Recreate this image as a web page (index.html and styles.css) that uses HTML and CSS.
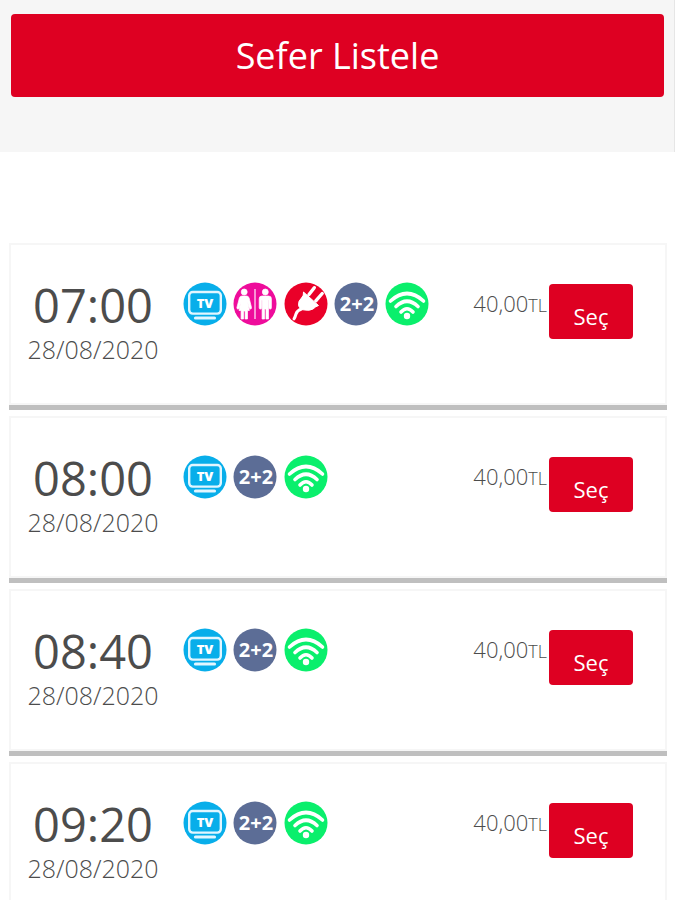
FILE: index.html
```html
<!DOCTYPE html>
<html lang="tr">
<head>
<meta charset="utf-8">
<meta name="viewport" content="width=device-width, initial-scale=1">
<title>Sefer Listele</title>
<link rel="stylesheet" href="styles.css">
</head>
<body>
<svg class="sprite" aria-hidden="true">
  <symbol id="tv" viewBox="0 0 44 44">
    <circle cx="22" cy="22" r="21.5" fill="#08aeea"/>
    <rect x="6.2" y="10" width="31.6" height="21.6" rx="3.5" fill="none" stroke="#e2f6ff" stroke-width="2.4"/>
    <path d="M12.500 36h19" stroke="#e2f6ff" stroke-width="3.200" stroke-linecap="round"/>
    <text class="tv-text" x="22" y="25.500" text-anchor="middle">TV</text>
  </symbol>
  <symbol id="wc" viewBox="0 0 44 44">
    <circle cx="22" cy="22" r="21.500" fill="#ee0c9b"/>
    <g fill="#fff" stroke="#fff" stroke-width=".7">
      <circle cx="11.200" cy="10" r="3"/>
      <path d="M9 14h4.500q2 0 2.600 2l2.400 9.500q.2 1.300-.8 1.500t-1.500-1.200L14.600 20l1.800 8.500H14.500V37h-2.400V29h-1.600v8H8.100V28.500H6l1.800-8.500-1.600 6q-.5 1.200-1.500 1t-.8-1.500L6.400 16Q7 14 9 14z"/>
      <circle cx="32.300" cy="10" r="3"/>
      <path d="M29 14h6.600q2.800 0 2.800 2.800v9q0 1.300-1.200 1.300t-1.200-1.300V18.500h-.5V37h-2.500V27h-1.400v10h-2.500V18.500h-.5v7.300q0 1.300-1.200 1.300t-1.200-1.300v-9Q26.200 14 29 14z"/>
    </g>
    <path d="M22 7v30" stroke="#fbb6e2" stroke-width="1.600"/>
  </symbol>
  <symbol id="plug" viewBox="0 0 44 44">
    <circle cx="22" cy="22" r="21.500" fill="#ea0029"/>
    <path d="M19.500 10L34.500 23.500Q31.500 24.500 29 27q-3.500 2-8 1-5 0-6.500-4.500-.5-4.500 3-7.500 2.500-2.500 2-6z" fill="#fff" stroke="#fff" stroke-width="1" stroke-linejoin="round"/>
    <path d="M25 12.500l5.300-6.800M31.800 18.800l6.400-7.300" stroke="#fff" stroke-width="3.400" stroke-linecap="round"/>
    <path d="M17.500 27q-4.500 1.500-5.500 5t-2 4.800" fill="none" stroke="#fff" stroke-width="3" stroke-linecap="round"/>
  </symbol>
  <symbol id="seats" viewBox="0 0 44 44">
    <circle cx="22" cy="22" r="21.500" fill="#5c6d96"/>
    <text class="seats-text" x="23" y="29" text-anchor="middle">2+2</text>
  </symbol>
  <symbol id="wifi" viewBox="0 0 44 44">
    <circle cx="22" cy="22" r="21.500" fill="#0aef6c"/>
    <g fill="none" stroke="#fff" stroke-width="3.600" stroke-linecap="round">
      <path d="M5.500 19Q22 4 38.500 19"/>
      <path d="M11 24.500Q22 14 33 24.500"/>
      <path d="M16 30Q22 23.500 28 30"/>
    </g>
    <circle cx="22" cy="34" r="3.200" fill="#fff"/>
  </symbol>
</svg>

<header class="search">
  <button class="btn search-btn" type="button">Sefer Listele</button>
</header>

<main class="trips">
  <article class="trip">
    <div class="when"><time class="hour">07:00</time><time class="date">28/08/2020</time></div>
    <div class="features">
      <svg class="icon" role="img" aria-label="TV"><use href="#tv"/></svg>
      <svg class="icon" role="img" aria-label="WC"><use href="#wc"/></svg>
      <svg class="icon" role="img" aria-label="Priz"><use href="#plug"/></svg>
      <svg class="icon" role="img" aria-label="2+2"><use href="#seats"/></svg>
      <svg class="icon" role="img" aria-label="Wi-Fi"><use href="#wifi"/></svg>
    </div>
    <div class="price">40,00<span class="currency">TL</span></div>
    <button class="btn select-btn" type="button">Seç</button>
  </article>
  <article class="trip">
    <div class="when"><time class="hour">08:00</time><time class="date">28/08/2020</time></div>
    <div class="features">
      <svg class="icon" role="img" aria-label="TV"><use href="#tv"/></svg>
      <svg class="icon" role="img" aria-label="2+2"><use href="#seats"/></svg>
      <svg class="icon" role="img" aria-label="Wi-Fi"><use href="#wifi"/></svg>
    </div>
    <div class="price">40,00<span class="currency">TL</span></div>
    <button class="btn select-btn" type="button">Seç</button>
  </article>
  <article class="trip">
    <div class="when"><time class="hour">08:40</time><time class="date">28/08/2020</time></div>
    <div class="features">
      <svg class="icon" role="img" aria-label="TV"><use href="#tv"/></svg>
      <svg class="icon" role="img" aria-label="2+2"><use href="#seats"/></svg>
      <svg class="icon" role="img" aria-label="Wi-Fi"><use href="#wifi"/></svg>
    </div>
    <div class="price">40,00<span class="currency">TL</span></div>
    <button class="btn select-btn" type="button">Seç</button>
  </article>
  <article class="trip">
    <div class="when"><time class="hour">09:20</time><time class="date">28/08/2020</time></div>
    <div class="features">
      <svg class="icon" role="img" aria-label="TV"><use href="#tv"/></svg>
      <svg class="icon" role="img" aria-label="2+2"><use href="#seats"/></svg>
      <svg class="icon" role="img" aria-label="Wi-Fi"><use href="#wifi"/></svg>
    </div>
    <div class="price">40,00<span class="currency">TL</span></div>
    <button class="btn select-btn" type="button">Seç</button>
  </article>
</main>
</body>
</html>
```
FILE: styles.css
```css
* { box-sizing: border-box; }

html { scrollbar-width: none; }

body {
  margin: 0;
  background: #fff;
  color: #4c4c4c;
  font-family: "Open Sans", "Noto Sans", sans-serif;
}

.sprite { display: none; }

.btn {
  border: 0;
  border-radius: 4px;
  background: #de0022;
  color: #fff;
  font-family: inherit;
  cursor: pointer;
}

.search {
  padding: 14px 10px 55px 11px;
  background: #f6f6f6;
  border-right: 1px solid #e6e6e6;
}

.search-btn {
  display: block;
  width: 100%;
  padding: 17px 16px;
  font-size: 36px;
  line-height: 49px;
}

.trips {
  display: flex;
  flex-direction: column;
  gap: 6px;
  padding: 91px 8px 6px 9px;
}

.trip {
  display: flex;
  align-items: flex-start;
  padding: 39px 34px 35px 16px;
  border-bottom: 5px solid #bfbfbf;
  box-shadow: inset 0 0 0 2px #f6f6f6;
}

.when {
  display: flex;
  flex-direction: column;
  align-items: center;
  flex: 0 0 136px;
}

.hour {
  font-size: 47px;
  font-weight: 500;
  line-height: 46px;
}

.date {
  font-size: 25px;
  font-weight: 300;
  line-height: 42px;
  white-space: nowrap;
}

.features {
  display: grid;
  grid-template-columns: repeat(5, 1fr);
  flex: 0 0 252px;
  margin-left: 22px;
}

.icon {
  width: 44px;
  height: 44px;
}

.tv-text {
  fill: #fff;
  font-size: 13px;
  font-weight: 800;
}

.seats-text {
  fill: #fff;
  font-size: 20px;
  font-weight: 700;
}

.price {
  margin-left: auto;
  padding-right: 2px;
  font-size: 22px;
  font-weight: 300;
  line-height: 42px;
  white-space: nowrap;
}

.currency { font-size: 18px; }

.select-btn {
  flex: 0 0 84px;
  margin-top: 2px;
  padding: 17px 0 8px;
  font-size: 22px;
  font-weight: 500;
  line-height: 30px;
}
```
